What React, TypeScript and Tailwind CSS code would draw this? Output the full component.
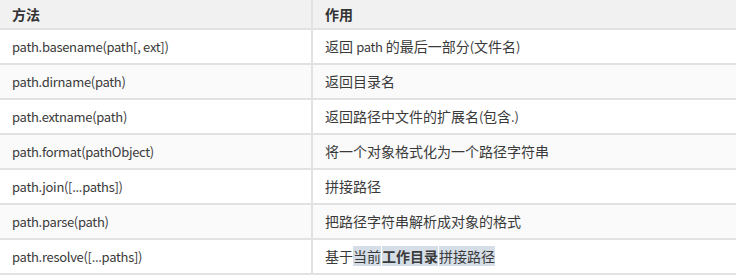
import React from "react";

const L = ({ children }: { children: React.ReactNode }) => (
  <span className="text-[13px] tracking-[-0.3px]">{children}</span>
);

const rows: [string, React.ReactNode][] = [
  ["path.basename(path[, ext])", <>返回 <L>path</L> 的最后一部分<L>(</L>文件名<L>)</L></>],
  ["path.dirname(path)", "返回目录名"],
  ["path.extname(path)", <>返回路径中文件的扩展名<L>(</L>包含<L>.)</L></>],
  ["path.format(pathObject)", "将一个对象格式化为一个路径字符串"],
  ["path.join([...paths])", "拼接路径"],
  ["path.parse(path)", "把路径字符串解析成对象的格式"],
  [
    "path.resolve([...paths])",
    <>
      基于
      <span className="bg-[#d5dee7]">当前</span>
      <span className="ml-px bg-[#d5dee7] font-bold">工作目录</span>
      <span className="ml-px bg-[#d5dee7]">拼接路径</span>
    </>,
  ],
];

export default function App() {
  return (
    <div
      className="w-[736px] h-[278px] bg-white text-[14px] text-[#3a3a3a] overflow-hidden"
      style={{ fontFamily: '"Noto Sans CJK SC", sans-serif' }}
    >
      <div className="flex h-[30px] bg-[#f1f1f1] border-b-2 border-[#e2e2e2] font-bold text-[#333]">
        <div className="w-[313px] border-r-2 border-[#e2e2e2] pl-3 flex items-center">方法</div>
        <div className="flex-1 pl-3 flex items-center">作用</div>
      </div>
      {rows.map(([m, d], i) => (
        <div
          key={i}
          className={`flex h-[35px] border-b-2 border-[#e2e2e2] ${i % 2 === 1 ? "bg-[#fafafa]" : "bg-white"}`}
        >
          <div className="w-[313px] border-r-2 border-[#e2e2e2] pl-3 flex items-center">
            <span className="text-[13px] tracking-[-0.3px]">{m}</span>
          </div>
          <div className="flex-1 pl-3 flex items-center">
            <span>{d}</span>
          </div>
        </div>
      ))}
    </div>
  );
}
